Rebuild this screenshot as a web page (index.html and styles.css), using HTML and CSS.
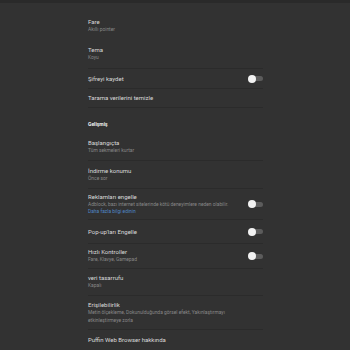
FILE: index.html
```html
<!DOCTYPE html>
<html>
<head>
<meta charset="utf-8">
<link rel="stylesheet" href="styles.css">
</head>
<body>
<div class="topbar"></div>
<div class="list">
  <div class="row h28">
    <div class="text"><div class="title">Fare</div><div class="sub">Akıllı pointer</div></div>
  </div>
  <div class="row h28">
    <div class="text"><div class="title">Tema</div><div class="sub">Koyu</div></div>
  </div>
  <div class="row h20 line">
    <div class="text"><div class="title">Şifreyi kaydet</div></div>
    <div class="toggle"><span class="track"></span><span class="knob"></span></div>
  </div>
  <div class="row h19 line">
    <div class="text"><div class="title">Tarama verilerini temizle</div></div>
  </div>
  <div class="header">Gelişmiş</div>
  <div class="row h27">
    <div class="text"><div class="title">Başlangıçta</div><div class="sub">Tüm sekmeleri kurtar</div></div>
  </div>
  <div class="row h28 line">
    <div class="text"><div class="title">İndirme konumu</div><div class="sub">Önce sor</div></div>
  </div>
  <div class="row h31 line">
    <div class="text"><div class="title">Reklamları engelle</div><div class="sub">Adblock, bazı internet sitelerinde kötü deneyimlere neden olabilir.</div><div class="link">Daha fazla bilgi edinin</div></div>
    <div class="toggle"><span class="track"></span><span class="knob"></span></div>
  </div>
  <div class="row h24 line">
    <div class="text"><div class="title">Pop-up'ları Engelle</div></div>
    <div class="toggle"><span class="track"></span><span class="knob"></span></div>
  </div>
  <div class="row h25 line">
    <div class="text"><div class="title">Hızlı Kontroller</div><div class="sub">Fare, Klavye, Gamepad</div></div>
    <div class="toggle"><span class="track"></span><span class="knob"></span></div>
  </div>
  <div class="row h27 line">
    <div class="text"><div class="title">veri tasarrufu</div><div class="sub">Kapalı</div></div>
  </div>
  <div class="row h34 line">
    <div class="text"><div class="title">Erişilebilirlik</div><div class="sub narrow">Metin ölçekleme, Dokunulduğunda görsel efekt, Yakınlaştırmayı etkinleştirmeye zorla</div></div>
  </div>
  <div class="row h21 line">
    <div class="text"><div class="title">Puffin Web Browser hakkında</div></div>
  </div>
</div>
</body>
</html>
```
FILE: styles.css
```css
html, body {
  margin: 0;
  padding: 0;
  background: #323232;
  font-family: Roboto, "Noto Sans", sans-serif;
  overflow: hidden;
}
.topbar {
  height: 3px;
  background: #2a2a2a;
}
.list {
  width: 175px;
  margin-left: 88px;
  padding-top: 9px;
}
.row {
  display: flex;
  align-items: center;
  justify-content: space-between;
  box-sizing: border-box;
}
.line {
  border-top: 1px solid #2b2b2b;
}
.h19 { height: 19px; }
.h20 { height: 20px; }
.h21 { height: 21px; }
.h24 { height: 24px; }
.h25 { height: 25px; }
.h27 { height: 27px; }
.h28 { height: 28px; }
.h31 { height: 31px; }
.h34 { height: 34px; }
.text {
  flex: 1;
  min-width: 0;
}
.title {
  color: #dadada;
  font-size: 6px;
  line-height: 8px;
}
.sub {
  color: #888888;
  font-size: 4.9px;
  line-height: 7.5px;
  white-space: nowrap;
}
.sub.narrow {
  white-space: normal;
  max-width: 150px;
}
.link {
  color: #4f86c6;
  font-size: 4.9px;
  line-height: 7px;
}
.header {
  height: 26px;
  box-sizing: border-box;
  border-top: 1px solid #2b2b2b;
  padding-top: 13px;
  color: #f2f2f2;
  font-weight: bold;
  font-size: 5px;
  line-height: 7px;
}
.toggle {
  position: relative;
  width: 15px;
  height: 8px;
  flex: none;
}
.track {
  position: absolute;
  left: 3px;
  top: 1.5px;
  width: 12px;
  height: 5px;
  border-radius: 3px;
  background: #5c5c5c;
}
.knob {
  position: absolute;
  left: 0;
  top: 0;
  width: 8px;
  height: 8px;
  border-radius: 50%;
  background: #f2f2f2;
}
```
